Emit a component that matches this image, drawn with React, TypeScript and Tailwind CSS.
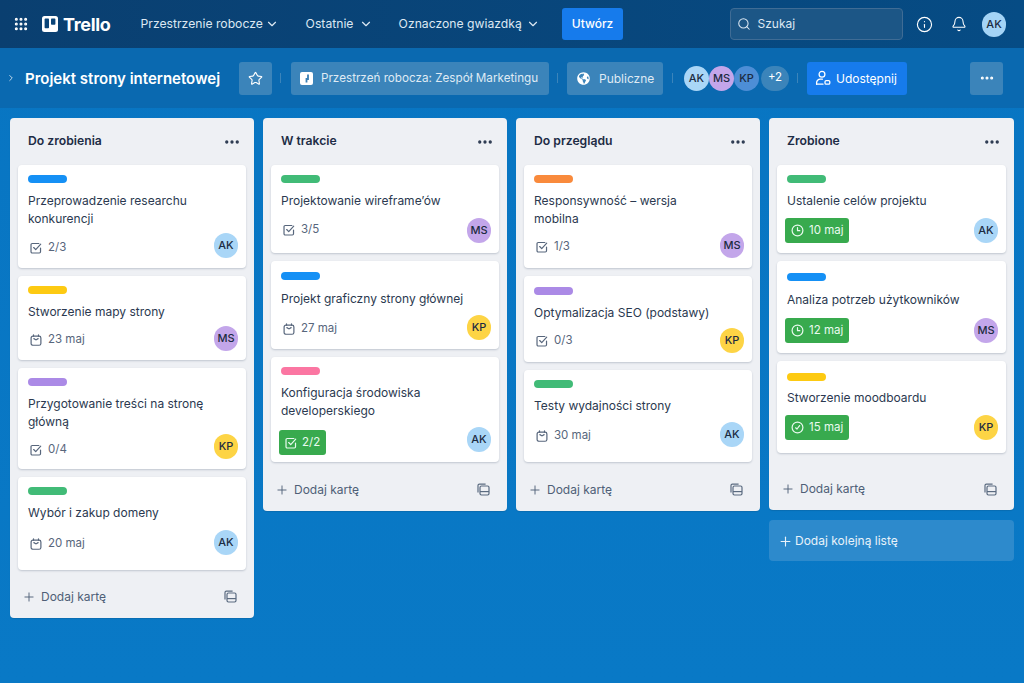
import { Bell, ChevronDown, ChevronRight, Ellipsis, Grip, Info, Plus, Search, Star } from "lucide-react";
import { FaGlobeAmericas } from "react-icons/fa";

type Meta = { kind: "check" | "date" | "clock" | "done"; text: string; green?: boolean; shift?: string };
type CardData = {
  label: string;
  title: string[];
  meta: Meta;
  who: "AK" | "MS" | "KP";
  height: string;
  footGap: string;
  pad?: string;
  titleGap?: string;
};

const avatarColors = {
  AK: "bg-[#a9d6f7]",
  MS: "bg-[#c3a6ea]",
  KP: "bg-[#fdd445]",
};

const columns: { name: string; height: string; foot: string; cards: CardData[] }[] = [
  {
    name: "Do zrobienia",
    height: "h-[500px]",
    foot: "h-[48px]",
    cards: [
      { label: "bg-[#1590f5]", title: ["Przeprowadzenie researchu", "konkurencji"], meta: { kind: "check", text: "2/3", shift: "mt-[4px]" }, who: "AK", height: "h-[103px]", footGap: "mt-[5px]" },
      { label: "bg-[#fdca12]", title: ["Stworzenie mapy strony"], meta: { kind: "date", text: "23 maj", shift: "mt-[2px]" }, who: "MS", height: "h-[84px]", footGap: "mt-[5px]" },
      { label: "bg-[#ab8ae6]", title: ["Przygotowanie treści na stronę", "główną"], meta: { kind: "check", text: "0/4", shift: "mt-[6px]" }, who: "KP", height: "h-[101px]", footGap: "mt-[3px]" },
      { label: "bg-[#41bb77]", title: ["Wybór i zakup domeny"], meta: { kind: "date", text: "20 maj", shift: "mt-[2px]" }, who: "AK", height: "h-[93px]", footGap: "mt-[8px]" },
    ],
  },
  {
    name: "W trakcie",
    height: "h-[393px]",
    foot: "h-[48px]",
    cards: [
      { label: "bg-[#41bb77]", title: ["Projektowanie wireframe’ów"], meta: { kind: "check", text: "3/5", shift: "mb-[2px]" }, who: "MS", height: "h-[88px]", footGap: "mt-[8px]" },
      { label: "bg-[#1590f5]", title: ["Projekt graficzny strony głównej"], meta: { kind: "date", text: "27 maj", shift: "mt-[2px]" }, who: "KP", height: "h-[88px]", footGap: "mt-[7px]", pad: "pt-[11px]", titleGap: "mt-[10px]" },
      { label: "bg-[#fb76a2]", title: ["Konfiguracja środowiska", "developerskiego"], meta: { kind: "check", text: "2/2", green: true, shift: "mt-[6px]" }, who: "AK", height: "h-[105px]", footGap: "mt-[4px]" },
    ],
  },
  {
    name: "Do przeglądu",
    height: "h-[393px]",
    foot: "h-[48px]",
    cards: [
      { label: "bg-[#f98a3c]", title: ["Responsywność – wersja", "mobilna"], meta: { kind: "check", text: "1/3", shift: "mt-[2px]" }, who: "MS", height: "h-[103px]", footGap: "mt-[5px]" },
      { label: "bg-[#ab8ae6]", title: ["Optymalizacja SEO (podstawy)"], meta: { kind: "check", text: "0/3" }, who: "KP", height: "h-[86px]", footGap: "mt-[6px]", pad: "pt-[11px]", titleGap: "mt-[9px]" },
      { label: "bg-[#41bb77]", title: ["Testy wydajności strony"], meta: { kind: "date", text: "30 maj", shift: "mt-[2px]" }, who: "AK", height: "h-[92px]", footGap: "mt-[7px]" },
    ],
  },
  {
    name: "Zrobione",
    height: "h-[392px]",
    foot: "h-[47px]",
    cards: [
      { label: "bg-[#41bb77]", title: ["Ustalenie celów projektu"], meta: { kind: "clock", text: "10 maj", green: true }, who: "AK", height: "h-[88px]", footGap: "mt-[8px]" },
      { label: "bg-[#1590f5]", title: ["Analiza potrzeb użytkowników"], meta: { kind: "clock", text: "12 maj", green: true }, who: "MS", height: "h-[92px]", footGap: "mt-[9px]", pad: "pt-[12px]", titleGap: "mt-[10px] mb-[1px]" },
      { label: "bg-[#fdca12]", title: ["Stworzenie moodboardu"], meta: { kind: "done", text: "15 maj", green: true }, who: "KP", height: "h-[92px]", footGap: "mt-[8px]", pad: "pt-[12px]", titleGap: "mt-[8px]" },
    ],
  },
];

function TrelloLogo() {
  return (
    <svg width="16" height="16" viewBox="0 0 16 16">
      <rect width="16" height="16" rx="2.5" fill="#fff" />
      <rect x="2.6" y="2.6" width="4.4" height="9.6" rx="0.8" fill="#0a4478" />
      <rect x="9" y="2.6" width="4.4" height="6.2" rx="0.8" fill="#0a4478" />
    </svg>
  );
}

function WorkspaceIcon() {
  return (
    <svg width="13" height="13" viewBox="0 0 13 13">
      <rect width="13" height="13" rx="2" fill="#fff" />
      <path d="M8 2.5 V7 H6.5 V10.5" fill="none" stroke="#3a7fb4" strokeWidth="1.8" />
    </svg>
  );
}

function ShareIcon() {
  return (
    <svg width="16" height="16" viewBox="0 0 16 16" fill="none" stroke="currentColor" strokeWidth="1.3" strokeLinecap="round" strokeLinejoin="round">
      <circle cx="7" cy="4.2" r="2.9" />
      <path d="M1.6 14.2 V12.8 a3.6 3.6 0 0 1 3.6 -3.6 H7.4" />
      <path d="M1.6 14.2 H8" />
      <rect x="10" y="10.6" width="4.8" height="3.6" rx="1.2" />
    </svg>
  );
}

function CheckIcon() {
  return (
    <svg width="12" height="12" viewBox="0 0 13 13" fill="none" stroke="currentColor" strokeWidth="1.3" strokeLinecap="round" strokeLinejoin="round">
      <path d="M11.4 6.5 V10.6 a1.3 1.3 0 0 1 -1.3 1.3 H2.4 a1.3 1.3 0 0 1 -1.3 -1.3 V2.9 a1.3 1.3 0 0 1 1.3 -1.3 H9.6" />
      <path d="M4 6 L6.2 8.2 L11.6 2.4" />
    </svg>
  );
}

function DateIcon() {
  return (
    <svg width="12" height="12" viewBox="0 0 13 13" fill="none" stroke="currentColor" strokeWidth="1.3" strokeLinecap="round">
      <rect x="1.2" y="2.2" width="10.6" height="10" rx="2" />
      <path d="M3.8 0.8 V2.4 M9.2 0.8 V2.4 M4.2 5 L6.5 6.4 L8.8 5" />
    </svg>
  );
}

function ClockIcon() {
  return (
    <svg width="13" height="13" viewBox="0 0 13 13" fill="none" stroke="currentColor" strokeWidth="1.2" strokeLinecap="round" strokeLinejoin="round">
      <circle cx="6.5" cy="6.5" r="5.4" />
      <path d="M6.5 3.6 V6.7 H8.8" />
    </svg>
  );
}

function DoneIcon() {
  return (
    <svg width="13" height="13" viewBox="0 0 13 13" fill="none" stroke="currentColor" strokeWidth="1.2" strokeLinecap="round" strokeLinejoin="round">
      <circle cx="6.5" cy="6.5" r="5.4" />
      <path d="M4.6 6.8 L6 8 L8.6 4.6" />
    </svg>
  );
}

function TemplateIcon() {
  return (
    <svg width="13" height="13" viewBox="0 0 13 13" fill="none" stroke="#5b6b80" strokeWidth="1.2" strokeLinejoin="round">
      <path d="M1 9.5 V2.6 a1.4 1.4 0 0 1 1.4 -1.4 H8.6" />
      <rect x="3" y="3" width="9" height="9" rx="1.4" />
      <path d="M3 8.6 H12" />
    </svg>
  );
}

function Avatar({ who, size = "w-6 h-6" }: { who: "AK" | "MS" | "KP"; size?: string }) {
  return (
    <div className={`${size} ${avatarColors[who]} rounded-full flex items-center justify-center text-[11px] font-medium text-[#1c2b41]`}>
      {who}
    </div>
  );
}

function MetaIcon({ kind }: { kind: Meta["kind"] }) {
  if (kind === "check") return <CheckIcon />;
  if (kind === "date") return <DateIcon />;
  if (kind === "clock") return <ClockIcon />;
  return <DoneIcon />;
}

function Separator() {
  return <div className="w-px h-[10px] bg-[#3b84ba]" />;
}

function Card({ card }: { card: CardData }) {
  return (
    <div className={`${card.height} ${card.pad ?? "pt-[10px]"} bg-white rounded-[4px] shadow-[0_1px_2px_rgba(30,50,80,0.22)] pl-[10px] pr-[8px] shrink-0`}>
      <div className={`${card.label} w-[39px] h-[8px] rounded-full`} />
      <div className={`${card.titleGap ?? "mt-[9px] mb-[1px]"} text-[12px] leading-[18px] text-[#2b3950] whitespace-nowrap`}>
        {card.title.map((line) => (
          <div key={line}>{line}</div>
        ))}
      </div>
      <div className={`${card.footGap} flex items-center justify-between`}>
        {card.meta.green ? (
          <div className={`${card.meta.shift ?? ""} -ml-[2px] h-[25px] px-[6px] flex items-center gap-[5px] rounded-[3px] bg-[#38aa4e] text-[#eafaf0] text-[11.5px]`}>
            <MetaIcon kind={card.meta.kind} />
            <span>{card.meta.text}</span>
          </div>
        ) : (
          <div className={`${card.meta.shift ?? ""} flex items-center gap-[6px] pl-[2px] text-[11.5px] text-[#57667c]`}>
            <MetaIcon kind={card.meta.kind} />
            <span>{card.meta.text}</span>
          </div>
        )}
        <Avatar who={card.who} size="w-[24px] h-[25px]" />
      </div>
    </div>
  );
}

function Column({ col }: { col: (typeof columns)[number] }) {
  return (
    <div className={`${col.height} bg-[#eef0f4] rounded-[4px] px-2 flex flex-col shadow-[0_1px_1px_rgba(0,0,0,0.1)]`}>
      <div className="h-[47px] shrink-0 flex items-center justify-between pl-[10px] pr-[5px]">
        <span className="text-[12.2px] font-semibold text-[#1d2c45]">{col.name}</span>
        <Ellipsis size={18} strokeWidth={2.4} className="text-[#2b3950]" />
      </div>
      <div className="flex flex-col gap-2">
        {col.cards.map((card) => (
          <Card key={card.title[0]} card={card} />
        ))}
      </div>
      <div className={`${col.foot} mt-auto shrink-0 pt-[5px] flex items-center justify-between pl-[4px] pr-[9px] text-[#4f5f77] text-[12px]`}>
        <div className="flex items-center gap-[5px]">
          <Plus size={14} strokeWidth={1.6} />
          <span>Dodaj kartę</span>
        </div>
        <TemplateIcon />
      </div>
    </div>
  );
}

export default function App() {
  return (
    <div className="w-[1024px] h-[683px] overflow-hidden flex flex-col font-['Inter',sans-serif] bg-gradient-to-b from-[#0875c2] to-[#0979c6]">
      <header className="h-[48px] shrink-0 flex items-center pl-[13px] pr-[18px] bg-gradient-to-r from-[#0a3f70] to-[#064c85] text-[#dce8f3] whitespace-nowrap">
        <Grip size={16} strokeWidth={2.6} className="text-white" />
        <div className="ml-[13px] flex items-center gap-[5px] text-white">
          <TrelloLogo />
          <span className="text-[18px] font-bold tracking-[-0.3px]">Trello</span>
        </div>
        <nav className="ml-[30px] flex items-center text-[12.2px]">
          <span className="w-[122px]">Przestrzenie robocze</span>
          <ChevronDown size={14} className="ml-[2px]" />
          <span className="ml-[27px] w-[48px]">Ostatnie</span>
          <ChevronDown size={14} className="ml-[5px]" />
          <span className="ml-[26px] w-[126px]">Oznaczone gwiazdką</span>
          <ChevronDown size={14} className="ml-[1px]" />
        </nav>
        <button className="ml-[22px] w-[62px] h-[32px] rounded-[3px] bg-[#167bec] text-white text-[12px] font-medium">Utwórz</button>
        <div className="ml-[107px] w-[173px] h-[32px] rounded-[4px] border border-[#3f6c95] bg-[#1c5686] flex items-center gap-[6px] pl-[6px] text-[12px]">
          <Search size={14} strokeWidth={1.8} />
          <span>Szukaj</span>
        </div>
        <Info size={17} strokeWidth={1.6} className="ml-[13px] text-white" />
        <Bell size={16} strokeWidth={1.6} className="ml-[18px] text-white" />
        <div className="ml-[15px] w-[24px] h-[25px] rounded-full bg-[#a4d4f6] flex items-center justify-center text-[11px] font-medium text-[#1c2b41]">AK</div>
      </header>

      <div className="h-[60px] shrink-0 flex items-center pl-[6px] bg-[#0a69b0] text-[#dfeaf4] whitespace-nowrap">
        <ChevronRight size={10} strokeWidth={2} />
        <h1 className="ml-[9px] mt-[2px] w-[194px] text-[15px] font-semibold text-white">Projekt strony internetowej</h1>
        <div className="ml-[20px] w-[33px] h-[33px] rounded-[3px] bg-[#3b84ba] flex items-center justify-center">
          <Star size={15} strokeWidth={1.8} className="text-white" />
        </div>
        <div className="ml-[8px] mr-[10px]"><Separator /></div>
        <div className="h-[33px] w-[258px] rounded-[3px] bg-[#3b84ba] flex items-center gap-[8px] pl-[9px] text-[11.7px]">
          <WorkspaceIcon />
          <span className="mt-[2px]">Przestrzeń robocza: Zespół Marketingu</span>
        </div>
        <div className="ml-[8px] mr-[9px]"><Separator /></div>
        <div className="h-[33px] w-[96px] rounded-[3px] bg-[#3b84ba] flex items-center gap-[9px] pl-[10px] text-[12px]">
          <FaGlobeAmericas size={13} className="text-white" />
          <span className="mt-[2px]">Publiczne</span>
        </div>
        <div className="ml-[9px] mr-[11px]"><Separator /></div>
        <div className="flex items-center">
          <Avatar who="AK" size="w-[25px] h-[25px]" />
          <Avatar who="MS" size="w-[25px] h-[25px]" />
          <Avatar who="KP" size="w-[25px] h-[25px] !bg-[#4d8ed6]" />
          <div className="ml-[2px] w-[28px] h-[25px] rounded-full bg-[#3b84ba] flex items-center justify-center text-[11.5px] text-white">+2</div>
        </div>
        <div className="ml-[8px] mr-[9px]"><Separator /></div>
        <button className="h-[33px] w-[100px] rounded-[3px] bg-[#167bec] flex items-center gap-[5px] pl-[8px] text-[12px] text-white">
          <ShareIcon />
          <span className="mt-[1px]">Udostępnij</span>
        </button>
        <div className="ml-[63px] w-[33px] h-[33px] rounded-[3px] bg-[#3b84ba] flex items-center justify-center">
          <Ellipsis size={16} strokeWidth={2.6} className="text-white" />
        </div>
      </div>

      <main className="flex-1 grid grid-cols-[244px_244px_244px_245px] gap-[9px] pl-[10px] pt-[10px] items-start">
        {columns.slice(0, 3).map((col) => (
          <Column key={col.name} col={col} />
        ))}
        <div className="flex flex-col gap-[10px]">
          <Column col={columns[3]} />
          <div className="h-[41px] pt-[1px] rounded-[4px] bg-[#2d8acc] flex items-center gap-[2px] pl-[9px] text-[12px] text-[#e8f2fa]">
            <Plus size={15} strokeWidth={1.8} />
            <span>Dodaj kolejną listę</span>
          </div>
        </div>
      </main>
    </div>
  );
}
